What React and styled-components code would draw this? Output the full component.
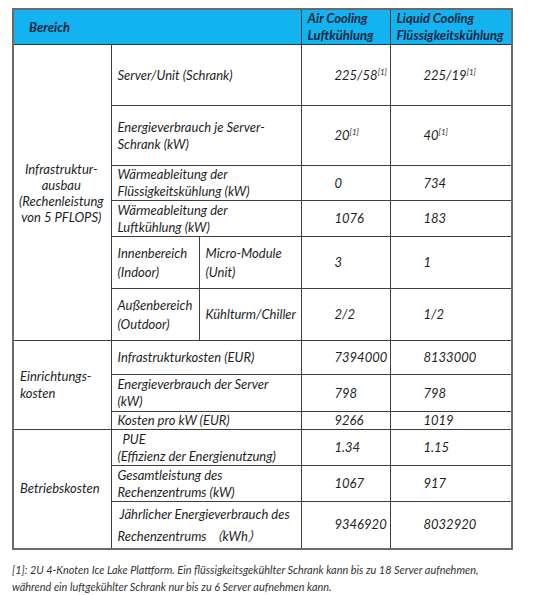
import styled, { createGlobalStyle } from 'styled-components';

const GlobalStyle = createGlobalStyle`
    body {
        margin: 0;
        background: #ffffff;
        font-family: 'Lato', 'Noto Sans CJK SC', sans-serif;
    }
`;

const Page = styled.div`
    padding: 8px 0 0 12px;
    width: 540px;
    box-sizing: border-box;
`;

const Table = styled.table`
    width: 499px;
    table-layout: fixed;
    border-collapse: collapse;
    border: 2px solid #6a6a6a;
    font-style: italic;
    font-size: 13px;
    line-height: 17px;
    color: #1e1e1e;
`;

const Col = styled.col`
    width: ${(p) => p.$w}px;
`;

const HeadRow = styled.tr`
    height: 35px;
    background: #13b3f0;
`;

const HeadCell = styled.th`
    text-align: left;
    font-weight: 700;
    color: #12263f;
    padding: 0 0 0 ${(p) => p.$pad || 6}px;
    border-top: 1px solid #1c3c5c;
    border-bottom: 1px solid #1c3c5c;
    border-left: ${(p) => (p.$first ? 'none' : '1px solid #3a3a3a')};
    vertical-align: middle;
`;

const Row = styled.tr`
    height: ${(p) => p.$h}px;
`;

const Cell = styled.td`
    border: 1px solid #3f3f3f;
    padding: 0 4px 0 ${(p) => p.$pad ?? 6}px;
    text-align: ${(p) => p.$align || 'left'};
    vertical-align: middle;
    line-height: ${(p) => p.$lh || 17}px;
    overflow: hidden;
`;

const ValueCell = styled(Cell).attrs({ $pad: 33 })``;

const Indent = styled.span`
    padding-left: ${(p) => p.$w}px;
`;

const Sup = styled.sup`
    font-size: 8px;
    line-height: 0;
    vertical-align: 5px;
`;

const Footnote = styled.p`
    margin: 11px 0 0;
    width: 525px;
    font-style: italic;
    font-size: 10.9px;
    line-height: 17px;
    color: #333;
`;

const rows = [
    { h: 61, label: 'Server/Unit (Schrank)', air: <>225/58<Sup>[1]</Sup></>, liquid: <>225/19<Sup>[1]</Sup></> },
    { h: 60, label: <>Energieverbrauch je Server-<br />Schrank (kW)</>, air: <>20<Sup>[1]</Sup></>, liquid: <>40<Sup>[1]</Sup></> },
    { h: 35, label: <>Wärmeableitung der<br />Flüssigkeitskühlung (kW)</>, air: '0', liquid: '734' },
    { h: 36, label: <>Wärmeableitung der<br />Luftkühlung (kW)</>, air: '1076', liquid: '183' },
];

export default function App() {
    return (
        <Page>
            <GlobalStyle />
            <Table>
                <colgroup>
                    <Col $w={98} />
                    <Col $w={88} />
                    <Col $w={102} />
                    <Col $w={89} />
                    <Col $w={122} />
                </colgroup>
                <thead>
                    <HeadRow>
                        <HeadCell colSpan={3} $first $pad={15}>Bereich</HeadCell>
                        <HeadCell>Air Cooling<br />Luftkühlung</HeadCell>
                        <HeadCell>Liquid Cooling<br />Flüssigkeitskühlung</HeadCell>
                    </HeadRow>
                </thead>
                <tbody>
                    {rows.map((r, i) => (
                        <Row $h={r.h} key={i}>
                            {i === 0 && (
                                <Cell rowSpan={6} $align="center" $pad={2} $lh={16}>
                                    Infrastruktur-<br />ausbau<br />(Rechenleistung<br />von 5 PFLOPS)
                                </Cell>
                            )}
                            <Cell colSpan={2}>{r.label}</Cell>
                            <ValueCell>{r.air}</ValueCell>
                            <ValueCell>{r.liquid}</ValueCell>
                        </Row>
                    ))}
                    <Row $h={52}>
                        <Cell $lh={19}>Innenbereich<br />(Indoor)</Cell>
                        <Cell $lh={19}>Micro-Module<br />(Unit)</Cell>
                        <ValueCell>3</ValueCell>
                        <ValueCell>1</ValueCell>
                    </Row>
                    <Row $h={52}>
                        <Cell $lh={19}>Außenbereich<br />(Outdoor)</Cell>
                        <Cell>Kühlturm/Chiller</Cell>
                        <ValueCell>2/2</ValueCell>
                        <ValueCell>1/2</ValueCell>
                    </Row>

                    <Row $h={34}>
                        <Cell rowSpan={3}>Einrichtungs-<br />kosten</Cell>
                        <Cell colSpan={2}>Infrastrukturkosten (EUR)</Cell>
                        <ValueCell>7394000</ValueCell>
                        <ValueCell>8133000</ValueCell>
                    </Row>
                    <Row $h={37}>
                        <Cell colSpan={2}>Energieverbrauch der Server<br />(kW)</Cell>
                        <ValueCell>798</ValueCell>
                        <ValueCell>798</ValueCell>
                    </Row>
                    <Row $h={17}>
                        <Cell colSpan={2}>Kosten pro kW (EUR)</Cell>
                        <ValueCell>9266</ValueCell>
                        <ValueCell>1019</ValueCell>
                    </Row>

                    <Row $h={36}>
                        <Cell rowSpan={3}>Betriebskosten</Cell>
                        <Cell colSpan={2}><Indent $w={5}>PUE</Indent><br />(Effizienz der Energienutzung)</Cell>
                        <ValueCell>1.34</ValueCell>
                        <ValueCell>1.15</ValueCell>
                    </Row>
                    <Row $h={36}>
                        <Cell colSpan={2}>Gesamtleistung des<br />Rechenzentrums (kW)</Cell>
                        <ValueCell>1067</ValueCell>
                        <ValueCell>917</ValueCell>
                    </Row>
                    <Row $h={47}>
                        <Cell colSpan={2} $lh={22}><Indent $w={2}>Jährlicher Energieverbrauch des</Indent><br />Rechenzentrums （kWh）</Cell>
                        <ValueCell>9346920</ValueCell>
                        <ValueCell>8032920</ValueCell>
                    </Row>
                </tbody>
            </Table>
            <Footnote>
                [1]: 2U 4-Knoten Ice Lake Plattform. Ein flüssigkeitsgekühlter Schrank kann bis zu 18 Server aufnehmen,<br />
                während ein luftgekühlter Schrank nur bis zu 6 Server aufnehmen kann.
            </Footnote>
        </Page>
    );
}
